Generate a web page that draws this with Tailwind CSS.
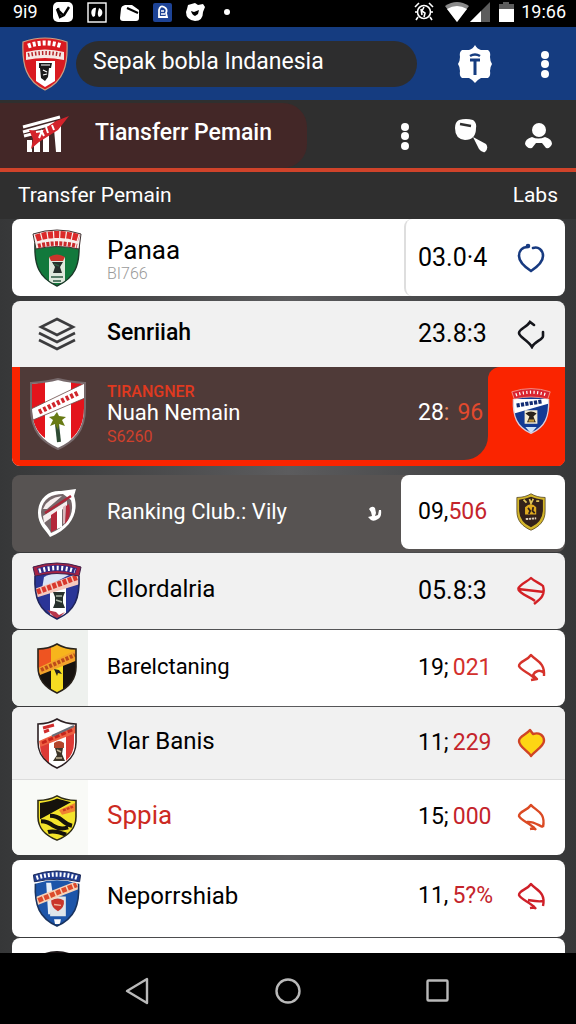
<!DOCTYPE html>
<html lang="id">
    <head>
        <meta charset="UTF-8">
        <meta name="viewport" content="width=device-width, initial-scale=1">
        <title>Sepak bobla Indanesia</title>
        <script src="https://cdn.jsdelivr.net/npm/@tailwindcss/browser@4"></script>
    </head>
    <body class="h-screen flex flex-col overflow-hidden bg-[#2f2f2f] font-['Roboto','Liberation_Sans',sans-serif] text-black">

        <!-- shared crest outlines -->
        <svg class="absolute" width="0" height="0" aria-hidden="true">
            <defs>
                <clipPath id="body"><path d="M3 14Q25 7 47 14C48 36 43 49 25 57C7 49 2 36 3 14Z"/></clipPath>
                <clipPath id="shield"><path d="M2 6C10 6 16 4 21 1C26 4 32 6 40 6V24C40 38 32 45 21 50C10 45 2 38 2 24Z"/></clipPath>
            </defs>
        </svg>

        <!-- status bar -->
        <div class="h-[27px] shrink-0 bg-black text-white flex items-center pl-[13px] pr-[10px] pb-[3px]">
            <span class="w-[34px] text-lg leading-6">9i9</span>
            <div class="flex flex-1">
                <svg class="w-[33px] h-[22px]" viewBox="0 0 33 22"><rect x="6" y="1" width="20" height="20" rx="5" fill="#fff"/><path d="M11 7l2 9 4-2 5-8M13 16l-3-8 6 6" fill="none" stroke="#000" stroke-width="2.4"/></svg>
                <svg class="w-[33px] h-[22px]" viewBox="0 0 33 22"><rect x="8" y="2" width="18" height="19" fill="#000" stroke="#fff" stroke-width="1.4"/><path d="M13 16c-4-5 0-10 3-9l-1 8zM19 7c5 2 4 8 0 9-2-3-1-5 0-9z" fill="#fff"/></svg>
                <svg class="w-[33px] h-[22px]" viewBox="0 0 33 22"><path d="M8 8q0-3 4-4h7l7 5v8q0 3-3 3H10q-3 0-3-3z" fill="#fff"/><path d="M14 7l11 5" stroke="#000" stroke-width="2"/></svg>
                <svg class="w-[33px] h-[22px]" viewBox="0 0 33 22"><rect x="7" y="2" width="19" height="19" rx="2" fill="#1d4396"/><path d="M13 9q1-5 5-3 4 2 2 6l1 4h-8z" fill="none" stroke="#fff" stroke-width="1.8"/><path d="M15 10h3M15 13h4" stroke="#fff" stroke-width="1.4"/></svg>
                <svg class="w-[33px] h-[22px]" viewBox="0 0 33 22"><path d="M8 8l1-4 7-2 3 2 5-1 2 3-2 5q0 9-8 9-9-1-9-9z" fill="#fff"/><path d="M12 10l3 1 5-2-1 4-3 2q-3-1-4-5z" fill="#000"/></svg>
                <svg class="w-[33px] h-[22px]" viewBox="0 0 33 22"><circle cx="15" cy="11" r="3" fill="#fff"/></svg>
            </div>
            <svg class="w-[22px] h-[22px] mr-[10px]" viewBox="0 0 22 22" fill="none" stroke="#fff" stroke-width="1.6"><circle cx="11" cy="11" r="6.5"/><path d="M2 6l4-4M16 2l4 4M11 6l-2 4 3 2-1 4M5 16l-2 3M17 16l2 3M2 11h3M17 11h3M8 8l1 6"/></svg>
            <svg class="w-[24px] h-[20px] mr-[1px]" viewBox="0 0 24 20"><path d="M0 4Q12-4 24 4L12 20Z" fill="#8a8a8a"/><path d="M2 7Q12 1 22 7L12 20Z" fill="#fff"/></svg>
            <svg class="w-[20px] h-[20px] mr-[9px]" viewBox="0 0 20 20"><path d="M20 0V20H0Z" fill="#5c5c5c"/><path d="M11 9V20H0Z" fill="#fff"/></svg>
            <svg class="w-[15px] h-[20px] mr-[7px]" viewBox="0 0 15 20"><path d="M4 0h6v2h5v6H0V2h4z" fill="#5c5c5c"/><path d="M0 7h15v13H0z" fill="#fff"/></svg>
            <span class="text-lg leading-6">19:66</span>
        </div>

        <!-- app bar -->
        <header class="h-[73px] shrink-0 bg-[#153c80] flex items-center pl-[22px]">
            <svg class="w-[46px] h-[54px] mr-2" viewBox="0 0 46 54">
                <path d="M1 5Q23-3 45 5C46 28 42 44 23 53C4 44 0 28 1 5Z" fill="#d91a20" stroke="#c9a184" stroke-width="1.2"/>
                <path d="M6 9Q23 3 40 9" fill="none" stroke="#fff" stroke-width="5" stroke-dasharray="3 2"/>
                <path d="M4 15Q23 10 42 15V23Q23 19 4 23Z" fill="#f6e7e4"/>
                <path d="M6 18Q23 14 40 18" fill="none" stroke="#b5262a" stroke-width="4" stroke-dasharray="1.5 2"/>
                <path d="M14 24h19v20l-10 6-9-6z" fill="#fff"/>
                <path d="M17 26h13l-1 5h-2l-1 9-3 4-4-3-1-10h-1z" fill="#191919"/>
                <path d="M21 33l4 2M21 38l4-1M19 28h9" stroke="#fff" stroke-width="1.2"/>
            </svg>
            <input type="search" aria-label="Cari" value="Sepak bobla Indanesia" class="flex-1 min-w-0 h-[46px] pb-1 rounded-full bg-[#2d2d2e] text-white text-[23px] px-[17px] outline-none appearance-none">
            <div class="flex gap-2 ml-[27px]">
                <button aria-label="Tim" class="w-[62px] h-12 flex items-center justify-center">
                    <svg class="w-9 h-10" viewBox="0 0 36 40"><path d="M18 1Q20 5 24 6L31 6Q34 8 33 13 33 17 35 20 33 23 33 27 34 32 31 34L24 34Q20 36 18 39 16 36 12 34L5 34Q2 32 3 27 3 23 1 20 3 17 3 13 2 8 5 6L12 6Q16 5 18 1Z" fill="#fff"/><path d="M13 12q5-3 10 0" fill="none" stroke="#153c80" stroke-width="2.4"/><path d="M13 16h10M18 16v15" stroke="#153c80" stroke-width="3"/></svg>
                </button>
                <button aria-label="Menu" class="w-[62px] h-12 flex items-center justify-center">
                    <svg class="w-2 h-7" viewBox="0 0 8 28" fill="#fff"><circle cx="4" cy="5" r="4"/><circle cx="4" cy="14" r="4"/><circle cx="4" cy="24" r="4"/></svg>
                </button>
            </div>
        </header>

        <nav class="h-[72px] shrink-0 bg-[#2f2f2f] border-b-4 border-[#d0432a] flex items-center justify-between pr-1 pt-[3px]">
            <a href="#" class="h-full w-[307px] rounded-r-3xl bg-[#432727] text-white flex items-center pl-[22px] pb-1">
                <svg class="w-[48px] h-[38px] mr-[25px]" viewBox="0 0 48 38">
                    <path d="M1 12L38 2M1 17l32-9M2 21l12-3" stroke="#fff" stroke-width="3"/>
                    <path d="M5 25h5v12H5zM12 29l6-3v11h-6zM21 22l6-3v18h-6zM32 14l7-4v27h-5z" fill="#fff"/>
                    <path d="M47 1L36 15 17 27l-8 7 2-10L7 15l12 1L34 6Z" fill="#d3232b"/>
                    <path d="M14 17l6-1-3 7M24 12l2 6M30 10l2 5M22 21l-3-6" stroke="#fff" stroke-width="2" fill="none"/>
                </svg>
                <span class="text-[23px] font-medium">Tiansferr Pemain</span>
            </a>
            <div class="flex">
                <button aria-label="Opsi" class="w-[67px] h-12 flex items-center justify-center">
                    <svg class="w-2 h-7" viewBox="0 0 8 28" fill="#fff"><circle cx="4" cy="5" r="4"/><circle cx="4" cy="14" r="4"/><circle cx="4" cy="24" r="4"/></svg>
                </button>
                <button aria-label="Cari" class="w-[67px] h-12 flex items-center justify-center">
                    <svg class="w-[33px] h-[34px]" viewBox="0 0 33 34"><path d="M4 1Q11-1 18 1 22 4 21 9 21 21 10 21 0 20 0 9 0 3 4 1ZM18 18L31 25Q34 29 30 33 27 34 24 30Z" fill="#fff"/><path d="M5 5l11 2" stroke="#2f2f2f" stroke-width="2.4"/></svg>
                </button>
                <button aria-label="Profil" class="w-[67px] h-12 flex items-center justify-center">
                    <svg class="w-[27px] h-[26px]" viewBox="0 0 27 26" fill="#fff"><circle cx="14" cy="7" r="7"/><path d="M7 14q6 3 13 0 7 2 7 7-2 5-6 4l-4-5h-6l-4 5q-5 1-7-4 0-5 7-7z"/></svg>
                </button>
            </div>
        </nav>

        <main class="flex-1 min-h-0 overflow-hidden">
            <div class="h-[47px] flex items-center justify-between px-[18px] text-white">
                <h1 class="text-[21px]">Transfer Pemain</h1>
                <a href="#" class="text-[21px]">Labs</a>
            </div>

            <div class="pl-3 pr-[11px] bg-linear-to-r from-[#363738] via-[#5c5c5e] to-[#363738]">
                <section class="h-[77px] mb-[5px] rounded-lg bg-white flex items-stretch">
                    <div class="w-[76px] pl-[14px] flex items-center justify-center">
                        <svg class="w-[50px] h-[58px]" viewBox="0 0 50 58">
                            <g clip-path="url(#body)"><path fill="#12793c" d="M0 0h50v58H0z"/><path d="M17 28h16v26H17z" fill="#dfe9dd"/><path d="M17 28q8-5 16 0l-2 4H19z" fill="#c9352b"/><path d="M20 33h11l-3 5 2 6h-9l2-6z" fill="#26302b"/><path d="M22 35l5 2M19 48h12M21 52h8" stroke="#2d5a41" stroke-width="1.4"/></g>
                            <path d="M3 14C2 36 7 49 25 57 43 49 48 36 47 14" fill="none" stroke="#1b3a29" stroke-width="1.4"/>
                            <path d="M1 5Q25-3 49 5L47 20Q25 15 4 20Z" fill="#f7efec" stroke="#403131"/>
                            <path d="M4 9Q25 2 47 9" fill="none" stroke="#db2a2a" stroke-width="7" stroke-dasharray="5 1.2"/>
                            <path d="M6 17Q25 12 45 17" fill="none" stroke="#c92a2c" stroke-width="4.4" stroke-dasharray="3 1.3"/>
                        </svg>
                    </div>
                    <div class="flex-1 pl-[19px] pt-1 flex flex-col justify-center">
                        <h2 class="text-[26px] leading-7">Panaa</h2>
                        <p class="text-base leading-5 text-[#9a9a9a] font-light">BI766</p>
                    </div>
                    <div class="flex items-center rounded-lg border-l-2 border-[#dedede] pl-[12px]">
                        <span class="w-[79px] text-[25px]">03.0·4</span>
                        <button aria-label="Favorit" class="w-[68px] flex justify-center"><svg class="w-[30px] h-[30px]" viewBox="0 0 30 30" fill="none" stroke="#173a80" stroke-width="2.6" stroke-linecap="round"><path d="M12 4C5 4 3 9 3 13c0 6 6 11 12 15 6-4 12-9 12-15 0-6-5-10-10-8"/><circle cx="12" cy="3" r="1"/></svg></button>
                    </div>
                </section>

                <section class="mb-[9px] rounded-lg overflow-hidden bg-[#f1f1f1]">
                    <div class="h-[66px] flex items-center">
                        <div class="w-[76px] pl-[14px] flex items-center justify-center">
                            <svg class="w-[38px] h-[34px]" viewBox="0 0 38 34" fill="none" stroke="#3c3c3e" stroke-width="2.6"><path d="M19 2L35 10 19 18 3 10Z"/><path d="M1 16l18 9 18-9M1 23l18 9 18-9"/></svg>
                        </div>
                        <h2 class="flex-1 pl-[19px] pb-[2px] text-[23px] font-medium">Senriiah</h2>
                        <span class="w-[79px] text-[25px]">23.8:3</span>
                        <button aria-label="Favorit" class="w-[68px] flex justify-center"><svg class="w-[30px] h-[30px]" viewBox="0 0 30 30" fill="none" stroke="#15161c" stroke-width="2.6" stroke-linecap="round"><path d="M18 6L14 3C11 8 3 10 3 14s9 7 13 14c3-6 11-7 11-11v-4"/></svg></button>
                    </div>
                    <div class="h-[99px] bg-[#fa2400] flex items-stretch pl-2">
                        <div class="flex-1 mb-[6px] bg-[#4f3a38] rounded-br-3xl flex items-center">
                            <div class="w-[76px] flex items-center justify-center">
                                <svg class="w-[58px] h-[72px]" viewBox="0 0 58 72">
                                    <path d="M2 5Q18 4 29 1 40 4 56 5V30C56 54 44 64 29 71 14 64 2 54 2 30Z" fill="#fff"/>
                                    <path d="M3 6l13-2v56Q3 51 3 30zM42 3l13 3v24q0 20-13 31z" fill="#e3141c"/>
                                    <path d="M2 31L56 5v15L4 42Z" fill="#fff" stroke="#6c4a48" stroke-width=".8"/>
                                    <path d="M10 34L49 15" stroke="#cf262c" stroke-width="5" stroke-dasharray="3 2"/>
                                    <path d="M28 46l2 18" stroke="#2e4a33" stroke-width="4"/>
                                    <path d="M28 34l2 4 7 1-4 3 3 6-6-2-1 6-3-6-5 2 3-6-4-3 5-1z" fill="#687a14"/>
                                    <path d="M2 5Q18 4 29 1 40 4 56 5V30C56 54 44 64 29 71 14 64 2 54 2 30Z" fill="none" stroke="#77696b" stroke-width="2"/>
                                </svg>
                            </div>
                            <div class="flex-1 pl-[11px] pt-1">
                                <p class="text-base leading-[18px] text-[#e0391f] font-medium">TIRANGNER</p>
                                <h2 class="text-[22px] leading-6 text-white">Nuah Nemain</h2>
                                <p class="text-base leading-6 text-[#d0402c]">S6260</p>
                            </div>
                            <span class="w-[70px] text-[23px] text-white">28<span class="text-[#f08a5c]">:</span><span class="ml-2 text-[#e2492d]">96</span></span>
                        </div>
                        <!-- the upper half keeps the panel colour behind the rounded corner -->
                        <div class="w-[77px] bg-linear-to-b from-[#4f3a38] from-50% to-[#fa2400] to-50% flex">
                            <div class="flex-1 bg-[#fa2400] rounded-tl-xl pl-[9px] pb-3 flex items-center justify-center">
                                <svg class="w-[40px] h-[48px]" viewBox="0 0 50 58">
                                    <g clip-path="url(#body)"><path fill="#123a94" d="M0 0h50v58H0z"/><path d="M0 14h50v5L4 32z" fill="#fff"/><path d="M7 22l32-5" stroke="#122c74" stroke-width="5" stroke-dasharray="4 1.5"/><path d="M17 28h16v17H17z" fill="#f3ead0"/><path d="M18 32q7-5 14 0l-4 4 3 7H20l3-7z" fill="#2a231b"/><path d="M22 41h7" stroke="#c39a3b" stroke-width="3"/><path d="M18 49h14l-7 8z" fill="#cfe2f7"/></g>
                                    <path d="M3 14C2 36 7 49 25 57 43 49 48 36 47 14" fill="none" stroke="#dccbd8" stroke-width="1.6"/>
                                    <path d="M1 5Q25-3 49 5L46 14Q25 9 4 14Z" fill="#da2430" stroke="#f5a79d"/>
                                    <path d="M6 9Q25 2 45 9" fill="none" stroke="#fff" stroke-width="4" stroke-dasharray="1.5 3"/>
                                </svg>
                            </div>
                        </div>
                    </div>
                </section>

                <section class="h-[77px] mb-px rounded-lg bg-[#575352] flex items-stretch">
                    <div class="w-[76px] pl-[14px] flex items-center justify-center">
                        <svg class="w-[40px] h-[50px]" viewBox="0 0 40 50">
                            <path d="M13 48C9 41 1 36 1 24 1 9 12 1 24 2L39 0 37 7C42 21 36 39 13 48Z" fill="#fff"/>
                            <path d="M14 44C12 38 4 34 4 23 5 10 14 5 26 5L34 11C38 24 31 37 14 44Z" fill="#75676a"/>
                            <path d="M6 20Q10 9 25 7L10 20ZM6 27L30 12v5L7 34Z" fill="#f6eeee"/>
                            <path d="M8 24L34 7" stroke="#ad2638" stroke-width="2.4"/>
                            <path d="M14 26l6-4v18l-6 3zM29 17l3-2q3 13-4 20z" fill="#b4283b"/>
                            <path d="M20 22l5-3v19l-5 2z" fill="#fff"/><path d="M26 18l3-2-1 18-2 1z" fill="#d9b5ba"/>
                        </svg>
                    </div>
                    <h2 class="flex-1 pl-[19px] pb-[5px] self-center text-[22px] text-white">Ranking Club.: Vily</h2>
                    <svg class="w-[14px] h-[16px] mr-[19px] self-center" viewBox="0 0 14 16" fill="#fff"><path d="M1 3Q4-1 7 2l1 5-1 3 3-1 1-5 2 0q1 7-3 9-4 3-7 1L0 11l4-1-1-4z"/></svg>
                    <div class="flex items-center rounded-lg bg-white pl-[17px] mb-[3px]">
                        <span class="w-[79px] text-[23px]">09,<span class="text-[#c4242b]">506</span></span>
                        <div class="w-[68px] flex justify-center">
                            <svg class="w-[32px] h-[38px]" viewBox="0 0 42 51"><g clip-path="url(#shield)"><path fill="#d3b52a" d="M0 0h42v51H0z"/></g><path d="M5 9Q14 8 21 5 28 8 37 9V24Q36 39 21 46 6 39 5 24Z" fill="#33211a"/><path d="M11 9l4 4M19 8l2 6 3-6M28 11h4" stroke="#dfc45a" stroke-width="2.4"/><path d="M13 29V19q8-8 15 0v10z" fill="#e0ac1f"/><path d="M17 20l3 4-2 4M24 19l-1 5 3 3" stroke="#33211a" stroke-width="2.4" fill="none"/><path d="M14 35l14-1" stroke="#ddd0b8" stroke-width="2.6" stroke-dasharray="3 1"/><path d="M2 6C10 6 16 4 21 1 26 4 32 6 40 6V24C40 38 32 45 21 50 10 45 2 38 2 24Z" fill="none" stroke="#4b3b1a"/></svg>
                        </div>
                    </div>
                </section>

                <section class="h-[76px] mb-px rounded-lg bg-[#f1f1f1] flex items-center">
                    <div class="w-[76px] pl-[14px] flex items-center justify-center">
                        <svg class="w-[50px] h-[58px]" viewBox="0 0 50 58">
                            <g clip-path="url(#body)"><path fill="#2a3597" d="M0 0h50v58H0z"/><path d="M18 24h16v34H18z" fill="#fff"/><path d="M12 15Q25 8 37 13L10 27z" fill="#d9e4f6"/><path d="M2 27L48 11v11L3 36Z" fill="#f5c9be"/><path d="M5 30L46 15" stroke="#d8382e" stroke-width="5.5" stroke-dasharray="4 1.5"/><path d="M21 30h12l-2 5v6l2 5H21l2-5v-6z" fill="#27302c"/><path d="M24 34h6M24 38l6 2" stroke="#aab5a5" stroke-width="1.4"/><path d="M15 48l9 2 3 3 6-3-8 8z" fill="#b8374b"/></g>
                            <path d="M3 14C2 36 7 49 25 57 43 49 48 36 47 14" fill="none" stroke="#20255b" stroke-width="1.6"/>
                            <path d="M1 5Q25-3 49 5L47 14Q25 9 3 14Z" fill="#a52244" stroke="#40204b"/>
                            <path d="M6 9Q25 3 44 9" fill="none" stroke="#2d2a86" stroke-width="6"/>
                            <path d="M7 9Q25 3 43 9" fill="none" stroke="#fff" stroke-width="4.5" stroke-dasharray="2 2.5"/>
                        </svg>
                    </div>
                    <h2 class="flex-1 pl-[19px] pb-1 text-2xl">Cllordalria</h2>
                    <span class="w-[79px] text-[25px]">05.8:3</span>
                    <button aria-label="Favorit" class="w-[68px] flex justify-center"><svg class="w-[30px] h-[30px]" viewBox="0 0 30 30" fill="none" stroke="#d32025" stroke-width="2.4" stroke-linejoin="round"><path d="M2 13C4 8 11 6 15 2c4 4 9 5 12 8 3 10-4 14-9 18M2 13L28 16M2 13c3 6 11 7 17 12"/></svg></button>
                </section>

                <section class="h-[76px] mb-px rounded-lg bg-white flex items-center">
                    <div class="w-[76px] h-full pl-[14px] rounded-l-lg bg-[#eef1ee] flex items-center justify-center">
                        <svg class="w-[42px] h-[51px]" viewBox="0 0 42 51">
                            <g clip-path="url(#shield)"><path fill="#17130f" d="M0 0h42v51H0z"/><path d="M0 0h17v25L0 32z" fill="#ee5421"/><path d="M15 0h27v12L15 25z" fill="#f7b51c"/><path d="M15 22h12v29H15z" fill="#f5dc22"/><path d="M2 25L42 6v11L4 32Z" fill="#f3a32b"/><path d="M5 27L39 12" stroke="#bd4a1a" stroke-width="4" stroke-dasharray="3 1.5"/><path d="M18 26l5 1 3 4-4-1-1 3z" fill="#222"/></g>
                            <path d="M2 6C10 6 16 4 21 1 26 4 32 6 40 6V24C40 38 32 45 21 50 10 45 2 38 2 24Z" fill="none" stroke="#28221a" stroke-width="1.6"/>
                        </svg>
                    </div>
                    <h2 class="flex-1 pl-[19px] pb-1 text-[22px]">Barelctaning</h2>
                    <span class="w-[79px] text-[23px]">19;<span class="ml-1 text-[#d3302c]">021</span></span>
                    <button aria-label="Favorit" class="w-[68px] flex justify-center"><svg class="w-[30px] h-[30px]" viewBox="0 0 30 30" fill="none" stroke="#d6332b" stroke-width="2.4" stroke-linejoin="round"><path d="M28 23C29 9 20 8 15 2 11 8 3 8 3 13c2 5 12 7 17 14M15 27l6-1-4-4c2-4 7-6 11-2"/></svg></button>
                </section>

                <section class="mb-[5px] rounded-lg overflow-hidden bg-white">
                    <div class="h-[73px] bg-[#f1f1f1] border-b border-[#dcdcdc] flex items-center">
                        <div class="w-[76px] pl-[14px] flex items-center justify-center">
                            <svg class="w-[42px] h-[51px]" viewBox="0 0 42 51">
                                <g clip-path="url(#shield)"><path fill="#fff" d="M0 0h42v51H0z"/><path d="M4 28l9-4v22Q4 38 4 28zM30 18l8-3v10q0 11-8 18z" fill="#dd3a36"/><path d="M3 23L40 7v8L4 29Z" fill="#ee6042"/><path d="M6 25L38 11" stroke="#c7241c" stroke-width="3" stroke-dasharray="5 2"/><path d="M16 18L38 8" stroke="#6a6e78" stroke-width="2"/><path d="M7 10l11-3M8 14l5-2" stroke="#d12d2d" stroke-width="3"/><path d="M18 25q5-4 10 0v5H18z" fill="#b3452b"/><path d="M19 30h8l-1 6 3 7H17l4-6z" fill="#3c3527"/><path d="M21 32l4 2M20 40h6" stroke="#c0b294" stroke-width="1.4"/></g>
                                <path d="M2 6C10 6 16 4 21 1 26 4 32 6 40 6V24C40 38 32 45 21 50 10 45 2 38 2 24Z" fill="none" stroke="#2b1f22" stroke-width="1.6"/>
                            </svg>
                        </div>
                        <h2 class="flex-1 pl-[19px] pb-1 text-2xl">Vlar Banis</h2>
                        <span class="w-[79px] text-[23px]">11;<span class="ml-1 text-[#c4242b]">229</span></span>
                        <button aria-label="Favorit" class="w-[68px] flex justify-center"><svg class="w-[30px] h-[30px]" viewBox="0 0 30 30" fill="#fdd614" stroke="#cf4425" stroke-width="2.4" stroke-linejoin="round"><path d="M14 2l3 4c6-2 11 1 11 7 0 5-9 10-13 15C12 23 3 19 3 13 3 8 10 7 14 2Z"/></svg></button>
                    </div>
                    <div class="h-[75px] flex items-center">
                        <div class="w-[76px] h-full pl-[14px] bg-[#f9faf7] flex items-center justify-center">
                            <svg class="w-[42px] h-[46px]" viewBox="0 0 42 51" preserveAspectRatio="none">
                                <g clip-path="url(#shield)"><path fill="#f3e32b" d="M0 0h42v51H0z"/><path d="M4 9Q16 7 21 4l14 4L4 27z" fill="#15120c"/><path d="M23 17L39 9v9L26 22z" fill="#f08332"/><path d="M27 17l10-4" stroke="#cc3c22" stroke-width="2.5" stroke-dasharray="3 1"/><path d="M14 23q7 0 12 5 5 5 10 6M5 29q7 0 12 5 7 5 15 2M12 41q7-2 18 3" fill="none" stroke="#15120c" stroke-width="4.5"/></g>
                                <path d="M2 6C10 6 16 4 21 1 26 4 32 6 40 6V24C40 38 32 45 21 50 10 45 2 38 2 24Z" fill="none" stroke="#2d2a16" stroke-width="1.6"/>
                            </svg>
                        </div>
                        <h2 class="flex-1 pl-[19px] pb-1 text-[26px] text-[#cc2a22]">Sppia</h2>
                        <span class="w-[79px] text-[23px]">15;<span class="ml-1 text-[#c4242b]">000</span></span>
                        <button aria-label="Favorit" class="w-[68px] flex justify-center"><svg class="w-[30px] h-[30px]" viewBox="0 0 30 30" fill="none" stroke="#db4a24" stroke-width="2.4" stroke-linejoin="round"><path d="M27 24C30 9 20 8 15 2 11 8 3 8 3 13c2 5 12 7 17 14M14 26l5-1M11 19c6-1 11 3 16 5"/></svg></button>
                    </div>
                </section>

                <section class="h-[77px] mb-px rounded-lg bg-white flex items-center">
                    <div class="w-[76px] pl-[14px] flex items-center justify-center">
                        <svg class="w-[50px] h-[57px]" viewBox="0 0 50 58">
                            <g clip-path="url(#body)"><path fill="#1d55a9" d="M0 0h50v58H0z"/><path d="M14 13h5l3 20-4 12h-2z" fill="#e5eef8"/><path d="M18 27h16v20H18z" fill="#dfe5ea"/><path d="M2 28L48 10v9L4 36Z" fill="#f6d2b8"/><path d="M6 31L45 15" stroke="#dc4a2c" stroke-width="5" stroke-dasharray="5 1.5"/><path d="M19 31q7-4 13 0 1 7-6 11-7-4-7-11z" fill="#c9352b"/><path d="M22 35l7 1" stroke="#f1b79e" stroke-width="1.5"/><path d="M22 50h7l-1 5h-5z" fill="#fff"/></g>
                            <path d="M3 14C2 36 7 49 25 57 43 49 48 36 47 14" fill="none" stroke="#19335f" stroke-width="1.6"/>
                            <path d="M1 5Q25-3 49 5L48 12Q25 7 2 12Z" fill="#223d90" stroke="#1c2a59"/>
                            <path d="M4 8Q25 1 46 8" fill="none" stroke="#fff" stroke-width="4.5" stroke-dasharray="2 2"/>
                        </svg>
                    </div>
                    <h2 class="flex-1 pl-[19px] pb-[6px] text-2xl">Neporrshiab</h2>
                    <span class="w-[79px] pb-1 text-[23px]">11,<span class="ml-1 text-[#c4242b]">5?%</span></span>
                    <button aria-label="Favorit" class="w-[68px] flex justify-center pb-1"><svg class="w-[30px] h-[30px]" viewBox="0 0 30 30" fill="none" stroke="#cf2029" stroke-width="2.4" stroke-linejoin="round"><path d="M27 24C30 10 20 8 15 2 11 8 3 8 3 13c2 5 12 7 17 14M14 26l5-1M12 18c6 1 11 2 15 1"/></svg></button>
                </section>

                <section class="h-[77px] rounded-lg bg-white flex items-start">
                    <div class="w-[76px] pl-[14px] pt-3 flex items-center justify-center">
                        <svg class="w-[42px] h-[51px]" viewBox="0 0 42 51"><path d="M2 6Q21-4 40 6V24C40 38 32 45 21 50 10 45 2 38 2 24Z" fill="#1a1416"/></svg>
                    </div>
                </section>
            </div>
        </main>

        <!-- system buttons -->
        <footer class="h-[71px] shrink-0 bg-black flex items-center justify-center pt-1">
            <button aria-label="Kembali" class="w-[150px] h-12 flex items-center justify-center"><svg class="w-7 h-7" viewBox="0 0 28 28" fill="none" stroke="#b9b9b9" stroke-width="2.4" stroke-linejoin="round"><path d="M23 2V26L3 14Z"/></svg></button>
            <button aria-label="Beranda" class="w-[150px] h-12 flex items-center justify-center"><svg class="w-7 h-7" viewBox="0 0 28 28" fill="none" stroke="#b9b9b9" stroke-width="2.4"><circle cx="14" cy="14" r="11.5"/></svg></button>
            <button aria-label="Terkini" class="w-[150px] h-12 flex items-center justify-center"><svg class="w-7 h-7" viewBox="0 0 28 28" fill="none" stroke="#b9b9b9" stroke-width="2.4"><rect x="3.500" y="3.500" width="20" height="20" rx="1"/></svg></button>
        </footer>
    </body>
</html>
